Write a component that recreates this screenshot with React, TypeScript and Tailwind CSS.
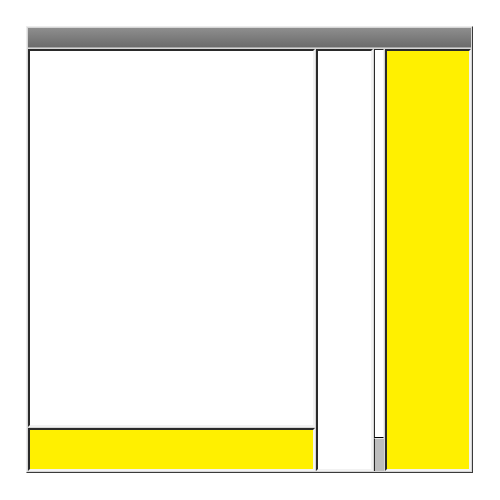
export default function App() {
  const sunken =
    "border-2 border-t-[#2a2a2a] border-l-[#2a2a2a] border-b-[#f2f2f2] border-r-[#f2f2f2]";

  return (
    <div className="w-[500px] h-[500px] bg-white pt-[26px] pl-[26px]">
      <div className="w-[447px] h-[447px] flex flex-col gap-[1px] p-[1px] bg-[#d6d6d6] border border-t-[#ececec] border-l-[#ececec] border-b-[#3a3a3a] border-r-[#3a3a3a]">
        {/* title bar */}
        <div className="h-[20px] bg-gradient-to-b from-[#8e8e8e] to-[#6c6c6c] border-b border-[#a8a8a8]" />

        <div className="flex-1 flex gap-[1px] min-h-0">
          {/* left column */}
          <div className="w-[287px] flex flex-col gap-[1px]">
            <div className={`flex-1 bg-white ${sunken}`} />
            <div className={`h-[43px] bg-[#fff000] ${sunken}`} />
          </div>

          {/* list */}
          <div className={`w-[57px] bg-white ${sunken}`} />

          {/* scrollbar */}
          <div className="w-[10px] flex flex-col">
            <div className="flex-1 bg-white border border-t-[#2a2a2a] border-l-[#2a2a2a] border-r-[#f2f2f2]" />
            <div className="h-[33px] bg-[#bdbdbd] border-l border-l-[#2a2a2a] border-t border-t-[#e6e6e6]" />
          </div>

          {/* right panel */}
          <div className={`flex-1 bg-[#fff000] ${sunken}`} />
        </div>
      </div>
    </div>
  );
}
